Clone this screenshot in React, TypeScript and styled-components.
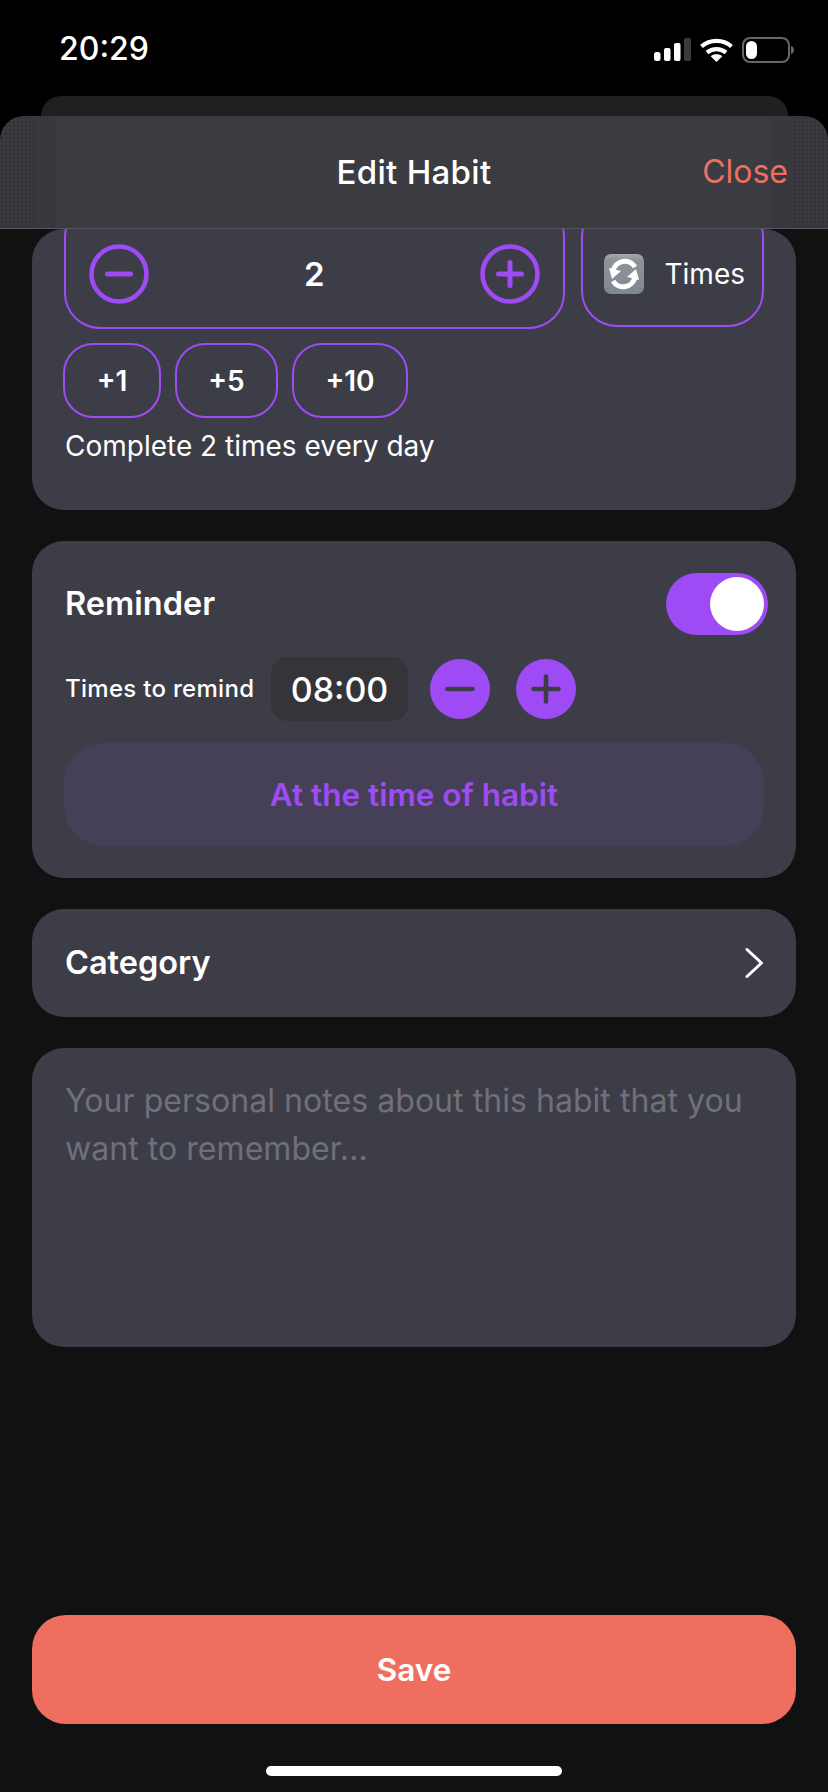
import React from "react";
import styled, { createGlobalStyle } from "styled-components";

const GlobalStyle = createGlobalStyle`
  html, body { margin: 0; padding: 0; background: #000; }
  body { font-family: Inter, "Liberation Sans", sans-serif; -webkit-font-smoothing: antialiased; }
  * { box-sizing: border-box; }
`;

const PURPLE = "#9f4bf5";
const CARD = "#3d3d47";
const CORAL = "#ee6f60";

const Screen = styled.div`
  width: 828px; height: 1792px; background: #000; display: flex; flex-direction: column; overflow: hidden;
`;
const StatusBar = styled.div`
  height: 96px; flex: none; padding: 27px 34px 0 59px; display: flex; justify-content: space-between; align-items: flex-start;
`;
const Clock = styled.div`
  color: #fff; font-size: 32px; font-weight: 500; line-height: 44px;
`;
const StatusIcons = styled.div`
  display: flex; align-items: center; gap: 9px; margin-top: 10px;
`;
const BackSheet = styled.div`
  height: 20px; flex: none; margin: 0 40px 0 41px; background: #202020; border-radius: 20px 20px 0 0;
`;
const Header = styled.header`
  height: 113px; flex: none; position: relative; z-index: 2; border-radius: 24px 24px 0 0; overflow: hidden;
  background: linear-gradient(90deg, #3a3a40 0, #38383e 35px, #37383e 53px, #3b3b42 60px, #3b3b42 768px, #37383e 775px, #38383e 793px, #3a3a40 100%);
  border-bottom: 1px solid #55555b; display: flex; align-items: center; justify-content: center;
  &::before, &::after {
    content: ""; position: absolute; top: 0; bottom: 0; width: 35px;
    background-image: radial-gradient(circle, #303035 0.7px, transparent 1px);
    background-size: 4px 4px;
  }
  &::before { left: 0; }
  &::after { right: 0; }
`;
const Title = styled.h1`
  margin: 0; color: #fff; font-size: 33px; font-weight: 500; line-height: 40px; letter-spacing: 0.3px;
`;
const CloseLink = styled.span`
  position: absolute; right: 40px; top: 36px; color: ${CORAL}; font-size: 32px; line-height: 40px;
`;
const Body = styled.main`
  flex: 1; min-height: 0; background: #111; padding: 0 32px; display: flex; flex-direction: column; gap: 31px; overflow: hidden;
`;
const Card = styled.section`
  background: ${CARD}; border-radius: 32px; flex: none;
`;
const RepeatCard = styled(Card)`
  height: 281px; padding: 0 32px; display: flex; flex-direction: column;
`;
const StepRow = styled.div`
  display: flex; gap: 16px; align-items: flex-start; margin-top: -28px;
`;
const Stepper = styled.div`
  width: 502px; height: 128px; border: 2px solid ${PURPLE}; border-radius: 36px; display: flex; align-items: flex-end;
  justify-content: space-between; padding: 0 23px 23px 23px;
`;
const StepValue = styled.span`
  color: #fff; font-size: 33px; font-weight: 600; line-height: 60px;
`;
const UnitBox = styled.div`
  width: 184px; height: 126px; border: 2px solid ${PURPLE}; border-radius: 36px; display: flex; align-items: flex-end;
  padding: 0 0 31px 21px; gap: 21px;
`;
const UnitLabel = styled.span`
  color: #fff; font-size: 28px; line-height: 40px;
`;
const Chips = styled.div`
  display: flex; gap: 14px; margin: 14px 0 0 -1px;
`;
const Chip = styled.button<{ $w: number }>`
  width: ${(p) => p.$w}px; height: 75px; background: none; border: 2px solid ${PURPLE}; border-radius: 30px; color: #fff;
  font: 600 28px Inter, sans-serif; padding: 0;
`;
const Hint = styled.p`
  margin: 8px 0 0 1px; color: #fff; font-size: 28px; line-height: 40px;
`;
const ReminderCard = styled(Card)`
  height: 337px; padding: 0 32px; display: flex; flex-direction: column;
`;
const ReminderHead = styled.div`
  height: 125px; flex: none; display: flex; justify-content: space-between; align-items: center; padding: 0 0 0 1px;
  margin-right: -4px;
`;
const CardTitle = styled.h2`
  margin: 0; color: #fff; font-size: 32.5px; font-weight: 600; line-height: 40px;
`;
const Toggle = styled.div`
  width: 102px; height: 62px; border-radius: 31px; background: ${PURPLE}; display: flex; align-items: center; justify-content: flex-end; padding-right: 4px;
`;
const Knob = styled.div`
  width: 54px; height: 54px; border-radius: 50%; background: #fff;
`;
const TimeRow = styled.div`
  display: flex; align-items: center; height: 66px; flex: none; margin-top: -10px;
`;
const TimeLabel = styled.span`
  color: #fff; font-size: 24px; font-weight: 500; line-height: 32px; width: 207px; padding-left: 1px; letter-spacing: 0.3px;
`;
const TimeBox = styled.div`
  width: 137px; height: 64px; border-radius: 16px; background: #353539; color: #fff; font-size: 34px; font-weight: 500;
  display: flex; align-items: center; justify-content: center;
`;
const RoundButtons = styled.div`
  display: flex; gap: 26px; margin-left: 22px;
`;
const RoundButton = styled.div`
  width: 60px; height: 60px; border-radius: 50%; background: ${PURPLE}; display: flex; align-items: center; justify-content: center;
`;
const WideButton = styled.button`
  margin-top: 21px; height: 103px; flex: none; width: 100%; border: none; border-radius: 40px; background: #463f58; color: ${PURPLE};
  font: 600 31.5px Inter, sans-serif;
`;
const CategoryCard = styled(Card)`
  height: 108px; padding: 0 31px 0 33px; display: flex; align-items: center; justify-content: space-between;
`;
const NotesCard = styled(Card)`
  height: 299px; padding: 29px 33px; color: #70707a; font-size: 32px; line-height: 48px; letter-spacing: 0.05px;
`;
const SaveBar = styled.div`
  flex: none; background: #111; padding: 0 32px; height: 177px;
`;
const SaveButton = styled.button`
  width: 100%; height: 109px; border: none; border-radius: 34px; background: ${CORAL}; color: #fff; font: 600 31.5px Inter, sans-serif;
`;
const HomeBar = styled.div`
  width: 296px; height: 10px; border-radius: 5px; background: #fff; margin: 42px auto 0;
`;

const RingIcon = ({ plus }: { plus?: boolean }) => (
  <svg width="60" height="60" viewBox="0 0 60 60" fill="none" stroke={PURPLE} strokeLinecap="round">
    <circle cx="30" cy="30" r="27.5" strokeWidth="4.6" />
    <path d={plus ? "M18.500 30h23M30 18.500v23" : "M18.500 30h23"} strokeWidth="5" />
  </svg>
);
const SolidIcon = ({ plus }: { plus?: boolean }) => (
  <svg width="30" height="30" viewBox="0 0 30 30" fill="none" stroke="#3d3d47" strokeWidth="4.6" strokeLinecap="round">
    <path d={plus ? "M2.500 15h25M15 2.500v25" : "M2.500 15h25"} />
  </svg>
);
const SyncEmoji = () => (
  <svg width="40" height="40" viewBox="0 0 40 40">
    <defs>
      <linearGradient id="syncBg" x1="0" y1="0" x2="0" y2="1">
        <stop offset="0" stopColor="#a9a9ac" />
        <stop offset="0.14" stopColor="#8f949b" />
        <stop offset="1" stopColor="#7e8792" />
      </linearGradient>
    </defs>
    <rect width="40" height="40" rx="7" fill="url(#syncBg)" />
    <path d="M9 17a12 12 0 0 1 22-4" fill="none" stroke="#fff" strokeWidth="5" />
    <path d="M31 23a12 12 0 0 1-22 4" fill="none" stroke="#fff" strokeWidth="5" />
    <path d="M5 14l12 3-9 8z" fill="#fff" />
    <path d="M35 26l-12-3 9-8z" fill="#fff" />
  </svg>
);
const Chevron = () => (
  <svg width="20" height="32" viewBox="0 0 20 32" fill="none" stroke="#fff" strokeWidth="3" strokeLinecap="round" strokeLinejoin="round">
    <path d="M2 2.500l14.500 13.500L2 29.500" />
  </svg>
);
const SignalIcon = () => (
  <svg width="37" height="24" viewBox="0 0 37 24" fill="#fff">
    <rect x="0" y="14" width="6.500" height="9" rx="2.500" />
    <rect x="10" y="10" width="6.500" height="13" rx="2" />
    <rect x="20" y="5" width="6.500" height="18" rx="2" />
    <rect x="30" y="0" width="7" height="23" rx="2" fill="#3a3a3c" />
  </svg>
);
const WifiIcon = () => (
  <svg width="33" height="24" viewBox="0 0 33 24" fill="none" stroke="#fff" strokeWidth="4.2">
    <path d="M1.500 8.500C10 1 23 1 31.500 8.500" />
    <path d="M7 14.500c5.500-4.500 13.500-4.500 19 0" />
    <path d="M16.500 24l-5.800-5.800c3.200-2.600 8.400-2.600 11.600 0z" fill="#fff" stroke="none" />
  </svg>
);
const BatteryIcon = () => (
  <svg width="52" height="26" viewBox="0 0 52 26" fill="none">
    <rect x="1" y="1" width="46" height="24" rx="7" stroke="#66666b" strokeWidth="2" />
    <rect x="4" y="4" width="11" height="18" rx="5.500" fill="#fff" />
    <path d="M49 9c2 .5 3 2 3 4s-1 3.500-3 4z" fill="#66666b" />
  </svg>
);

export default function App() {
  return (
    <Screen>
      <GlobalStyle />
      <StatusBar>
        <Clock>20:29</Clock>
        <StatusIcons>
          <SignalIcon />
          <WifiIcon />
          <BatteryIcon />
        </StatusIcons>
      </StatusBar>
      <BackSheet />
      <Header>
        <Title>Edit Habit</Title>
        <CloseLink>Close</CloseLink>
      </Header>
      <Body>
        <RepeatCard>
          <StepRow>
            <Stepper>
              <RingIcon />
              <StepValue>2</StepValue>
              <RingIcon plus />
            </Stepper>
            <UnitBox>
              <SyncEmoji />
              <UnitLabel>Times</UnitLabel>
            </UnitBox>
          </StepRow>
          <Chips>
            <Chip $w={98}>+1</Chip>
            <Chip $w={103}>+5</Chip>
            <Chip $w={116}>+10</Chip>
          </Chips>
          <Hint>Complete 2 times every day</Hint>
        </RepeatCard>
        <ReminderCard>
          <ReminderHead>
            <CardTitle>Reminder</CardTitle>
            <Toggle><Knob /></Toggle>
          </ReminderHead>
          <TimeRow>
            <TimeLabel>Times to remind</TimeLabel>
            <TimeBox>08:00</TimeBox>
            <RoundButtons>
              <RoundButton><SolidIcon /></RoundButton>
              <RoundButton><SolidIcon plus /></RoundButton>
            </RoundButtons>
          </TimeRow>
          <WideButton>At the time of habit</WideButton>
        </ReminderCard>
        <CategoryCard>
          <CardTitle>Category</CardTitle>
          <Chevron />
        </CategoryCard>
        <NotesCard>Your personal notes about this habit that you want to remember...</NotesCard>
      </Body>
      <SaveBar>
        <SaveButton>Save</SaveButton>
        <HomeBar />
      </SaveBar>
    </Screen>
  );
}
